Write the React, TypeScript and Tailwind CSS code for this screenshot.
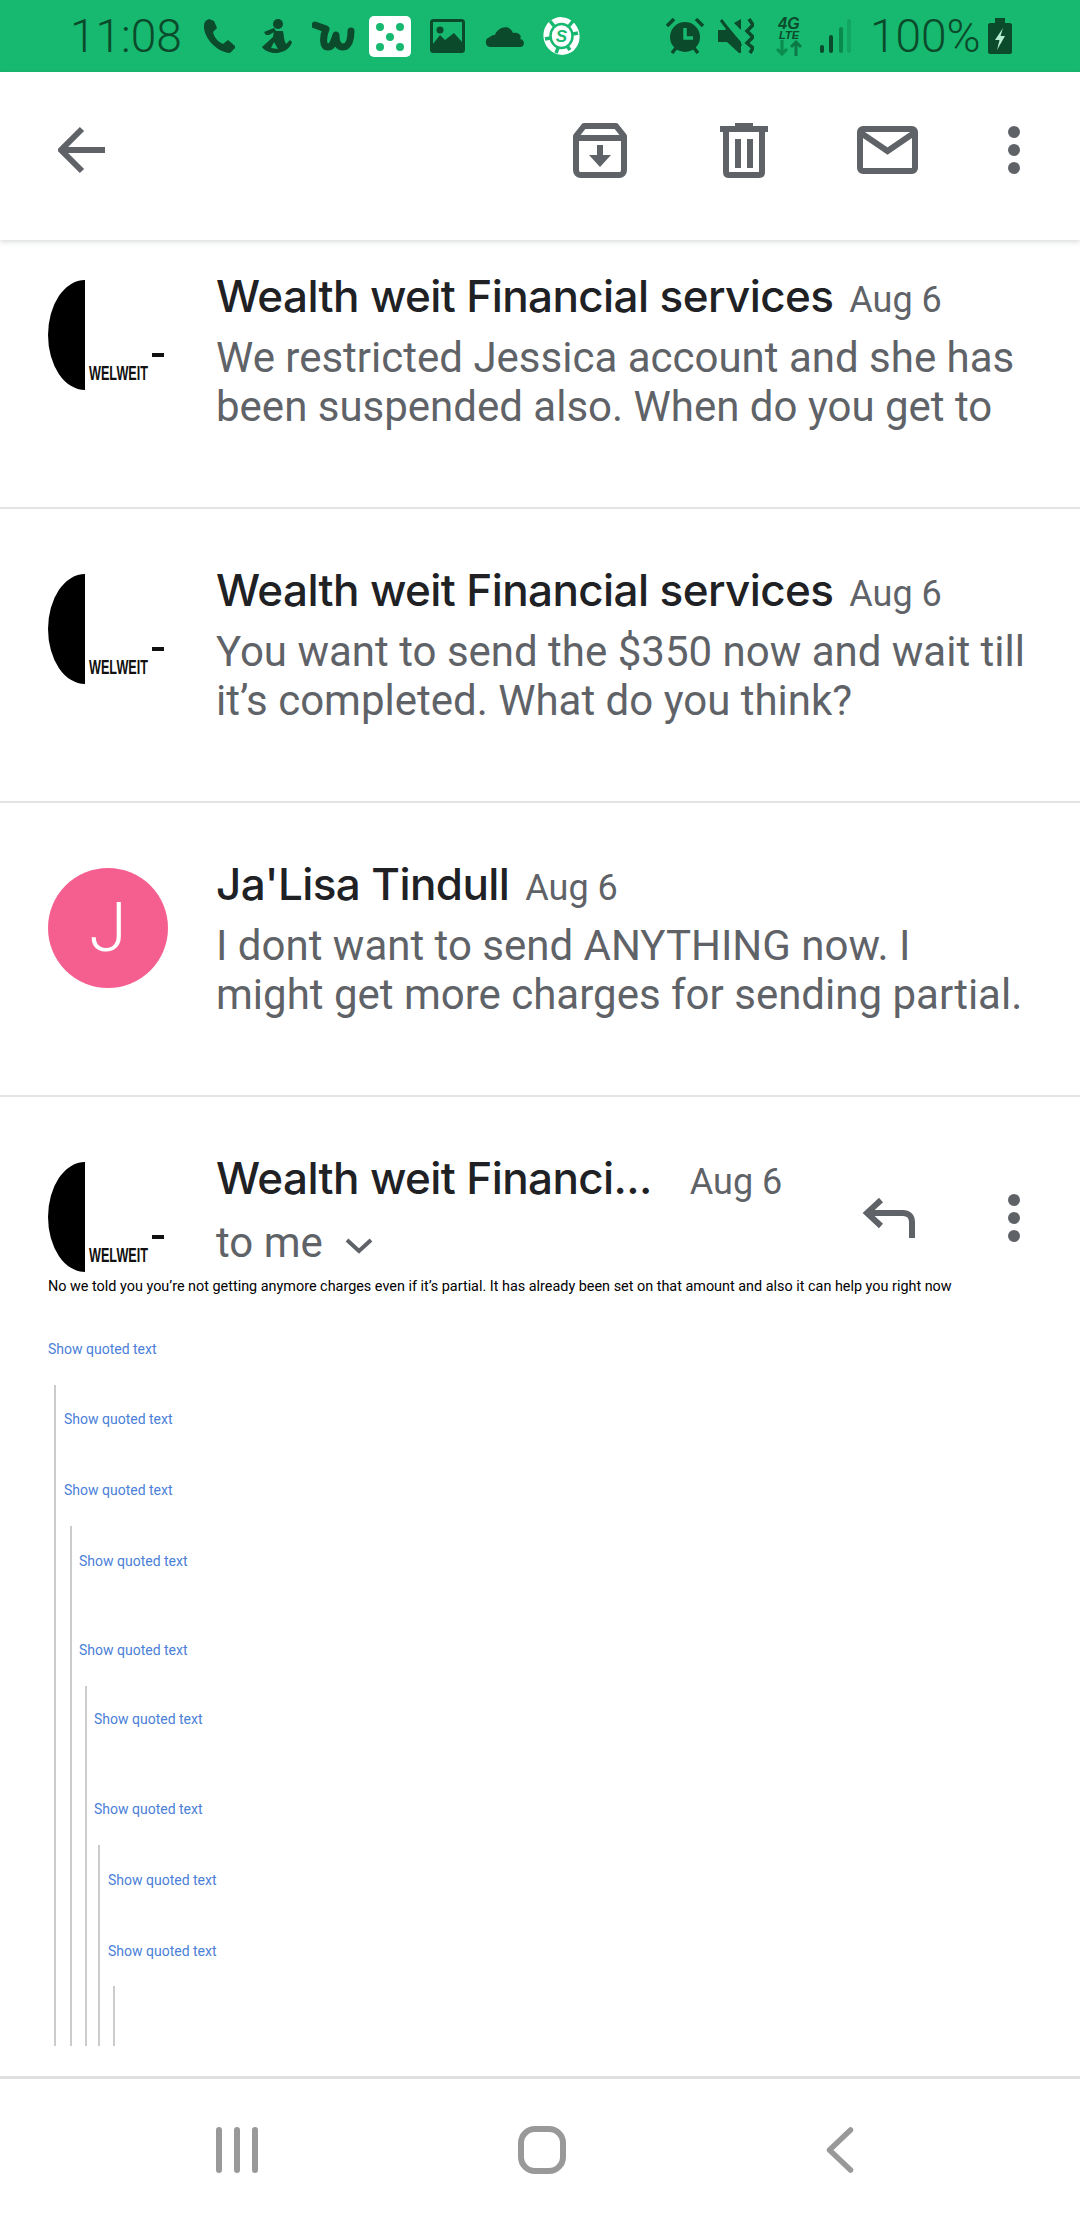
import React from "react";

const DARK = "#0b4a2b";
const GRAY = "#5f6368";

function Logo() {
  return (
    <svg width="120" height="112" viewBox="0 0 120 112" className="shrink-0 block">
      <path d="M37 0 A37 55 0 0 0 37 110 Z" fill="#000" />
      <rect x="104" y="73" width="12" height="4" fill="#111" />
      <text x="41" y="100" fontFamily="'Liberation Sans', sans-serif" fontWeight="700" fontSize="21" textLength="59" lengthAdjust="spacingAndGlyphs" fill="#111">WELWEIT</text>
    </svg>
  );
}

function Dots() {
  return (
    <svg width="12" height="48" viewBox="0 0 12 48" className="block shrink-0">
      <circle cx="6" cy="6" r="6" fill={GRAY} />
      <circle cx="6" cy="24" r="6" fill={GRAY} />
      <circle cx="6" cy="42" r="6" fill={GRAY} />
    </svg>
  );
}

function StatusBar() {
  return (
    <div className="h-[72px] shrink-0 bg-[#17b86f] flex items-center justify-between pl-[70px] pr-[68px] text-[#0b4a2b] font-['Roboto',sans-serif]">
      <div className="flex items-center">
        <span className="w-[132px] text-[46px] leading-[46px] font-light">11:08</span>
        <svg width="34" height="34" viewBox="0 0 34 34"><path d="M7 0 L12 2 L15 9 L11 13 C12 18 16 23 21 25 L26 21 L33 27 L33 29 L28 34 C14 33 1 18 2 6 C2 3 4 1 7 0 Z" fill={DARK} /></svg>
        <svg width="30" height="34" viewBox="0 0 30 34" className="ml-[26px]"><circle cx="16" cy="5" r="5" fill={DARK} /><path d="M2 13 L12 9 L14 12 L7 16 L4 16 Z" fill={DARK} /><path d="M12 12 L21 12 C22 18 22 21 24 25 L28 21 L30 23 C28 30 22 33 15 34 C8 34 3 32 0 28 C4 24 8 21 11 18 Z" fill={DARK} /><path d="M12 23 L16 30 L9 29 Z" fill="#17b86f" /></svg>
        <svg width="43" height="30" viewBox="0 0 43 30" className="ml-[20px]"><path d="M3 4 L14 8 C11 15 10 26 16 26 C21 26 22 19 24 14 C24 20 25 26 31 26 C37 26 39 18 39 10" fill="none" stroke={DARK} strokeWidth="7" strokeLinecap="round" strokeLinejoin="round" /></svg>
        <svg width="42" height="41" viewBox="0 0 42 41" className="ml-[14px]"><rect width="42" height="41" rx="5" fill="#fff" /><circle cx="11" cy="11" r="4" fill="#17b86f" /><circle cx="31" cy="11" r="4" fill="#17b86f" /><circle cx="21" cy="21" r="4" fill="#17b86f" /><circle cx="11" cy="31" r="4" fill="#17b86f" /><circle cx="31" cy="31" r="4" fill="#17b86f" /></svg>
        <svg width="35" height="34" viewBox="0 0 35 34" className="ml-[19px]"><rect x="1.5" y="1.5" width="32" height="31" rx="2" fill="none" stroke={DARK} strokeWidth="3" /><circle cx="10" cy="11" r="3.5" fill={DARK} /><path d="M3 27 L3 25 L10 16 L15 21 L24 14 L32 23 L32 32 L3 32 Z" fill={DARK} /></svg>
        <svg width="39" height="22" viewBox="0 0 39 22" className="ml-[20px]"><path d="M5 22 C0 22 -1 13 5 12 C7 10 9 10 10 10 C12 3 24 -2 28 8 C35 7 37 12 35 14 C41 15 39 22 36 22 Z" fill={DARK} /></svg>
        <svg width="37" height="38" viewBox="0 0 37 38" className="ml-[19px]"><ellipse cx="18.5" cy="19" rx="18" ry="19" fill="#fff" transform="rotate(-20 18.5 19)" /><ellipse cx="18.5" cy="19" rx="11" ry="12" fill="#fff" stroke="#17b86f" strokeWidth="2.5" /><path d="M7 4 L11 9 M30 4 L26 9 M2 22 L7 21 M35 16 L30 17 M13 36 L15 31 M27 33 L24 29" stroke="#17b86f" strokeWidth="3.5" /><text x="18.5" y="25" textAnchor="middle" fontFamily="'Liberation Sans', sans-serif" fontWeight="700" fontStyle="italic" fontSize="17" fill="#17b86f">S</text></svg>
      </div>
      <div className="flex items-center">
        <svg width="38" height="36" viewBox="0 0 38 36"><circle cx="19" cy="19" r="15" fill={DARK} /><path d="M1 8 L8 1 M37 8 L30 1 M6 35 L10 30 M32 35 L28 30" stroke={DARK} strokeWidth="3.5" /><path d="M19 10 L19 20 L27 20" fill="none" stroke="#17b86f" strokeWidth="3.5" /></svg>
        <svg width="36" height="36" viewBox="0 0 36 36" className="ml-[14px]"><path d="M0 12 L7 12 L10 9 L23 24 L23 35 L21 35 L9 24 L0 24 Z" fill={DARK} /><path d="M16 5 L23 1 L23 12 Z" fill={DARK} /><path d="M3 2 L23 28" stroke={DARK} strokeWidth="3" /><path d="M31 1 L35 7 L29 13 L35 19 L29 25 L35 30 L32 35" fill="none" stroke={DARK} strokeWidth="3.5" /></svg>
        <div className="ml-[22px] w-[26px] flex flex-col items-center">
          <span className="text-[16px] leading-[14px] font-extrabold italic font-['Liberation_Sans',sans-serif]">4G</span>
          <span className="text-[11px] leading-[9px] font-bold italic font-['Liberation_Sans',sans-serif]">LTE</span>
          <svg width="26" height="16" viewBox="0 0 26 16"><path d="M6 0 L6 14 M1 9 L6 14 L11 9" fill="none" stroke="#0b8a4f" strokeWidth="3" /><path d="M20 16 L20 2 M15 7 L20 2 L25 7" fill="none" stroke="#0b7a46" strokeWidth="3" /></svg>
        </div>
        <svg width="31" height="34" viewBox="0 0 31 34" className="ml-[18px]"><rect x="0" y="26" width="4" height="8" rx="2" fill={DARK} /><rect x="9" y="16" width="4" height="18" rx="2" fill={DARK} /><rect x="19" y="8" width="4" height="26" rx="2" fill="#0b8a4f" /><rect x="27" y="0" width="4" height="34" rx="2" fill="#12a563" /></svg>
        <span className="ml-[19px] w-[118px] text-[46px] leading-[46px] font-light">100%</span>
        <svg width="24" height="36" viewBox="0 0 24 36"><path d="M7 0 L17 0 L17 5 L22 5 C23 5 24 6 24 7 L24 34 C24 35 23 36 22 36 L2 36 C1 36 0 35 0 34 L0 7 C0 6 1 5 2 5 L7 5 Z" fill={DARK} /><path d="M15 10 L7 22 L11.5 22 L9 32 L17 18 L12.5 18 Z" fill="#b7ecd2" /></svg>
      </div>
    </div>
  );
}

function Toolbar() {
  return (
    <div className="h-[168px] shrink-0 bg-white relative z-10 shadow-[0_2px_5px_rgba(60,64,67,0.18)] flex items-center pl-[58px] pr-[60px]">
      <svg width="48" height="48" viewBox="0 0 48 48" className="-mt-[12px]"><path d="M47 24 L5 24 M24 3 L3 24 L24 45" fill="none" stroke={GRAY} strokeWidth="6" /></svg>
      <div className="ml-auto flex items-center -mt-[12px]">
        <svg width="54" height="55" viewBox="0 0 54 55"><path d="M11 3 L43 3 L51 13 L51 47 C51 50 49 52 47 52 L7 52 C5 52 3 50 3 47 L3 13 Z" fill="none" stroke={GRAY} strokeWidth="6" strokeLinejoin="round" /><path d="M3 15 L51 15" stroke={GRAY} strokeWidth="6" /><path d="M24 22 L30 22 L30 32 L38 32 L27 44 L16 32 L24 32 Z" fill={GRAY} /></svg>
        <svg width="48" height="55" viewBox="0 0 48 55" className="ml-[93px]"><path d="M15 0 L33 0 L33 3 L48 3 L48 9 L0 9 L0 3 L15 3 Z" fill={GRAY} /><path d="M6 9 L6 49 C6 51 7 52 9 52 L39 52 C41 52 42 51 42 49 L42 9" fill="none" stroke={GRAY} strokeWidth="6" /><rect x="15" y="16" width="6" height="29" fill={GRAY} /><rect x="27" y="16" width="6" height="29" fill={GRAY} /></svg>
        <svg width="61" height="48" viewBox="0 0 61 48" className="ml-[89px]"><rect x="3" y="3" width="55" height="42" rx="3" fill="none" stroke={GRAY} strokeWidth="6" /><path d="M4 7 L30.5 25 L57 7" fill="none" stroke={GRAY} strokeWidth="6" /></svg>
        <div className="ml-[90px]"><Dots /></div>
      </div>
    </div>
  );
}

function Name({ children }: { children: React.ReactNode }) {
  return <span className="font-['Inter',sans-serif] font-medium text-[44px] leading-[56px] tracking-[-0.6px] text-[#202124] whitespace-nowrap">{children}</span>;
}

function When() {
  return <span className="font-['Roboto',sans-serif] text-[36px] leading-[56px] text-[#5f6368] whitespace-nowrap">Aug 6</span>;
}

function Row({ avatar, name, lines }: { avatar: React.ReactNode; name: string; lines: string[] }) {
  return (
    <div className="h-[294px] shrink-0 border-b-2 border-[#e3e4e6] pl-[48px] pt-[65px] flex bg-white">
      <div className="w-[168px] shrink-0">{avatar}</div>
      <div className="-mt-[12px]">
        <div className="flex items-baseline gap-[16px]">
          <Name>{name}</Name>
          <When />
        </div>
        <div className="mt-[5px] font-['Roboto',sans-serif] text-[42px] leading-[49px] text-[#5f6368] whitespace-nowrap">
          {lines.map((l) => (
            <div key={l}>{l}</div>
          ))}
        </div>
      </div>
    </div>
  );
}

function Show({ className = "" }: { className?: string }) {
  return <div className={`font-['Roboto',sans-serif] text-[14px] leading-[20px] text-[#4a80d8] whitespace-nowrap ${className}`}>Show quoted text</div>;
}

export default function App() {
  const jAvatar = (
    <div className="w-[120px] h-[120px] rounded-full bg-[#f45f90] flex items-center justify-center text-white font-['Roboto',sans-serif] font-light text-[68px] leading-none">J</div>
  );
  return (
    <div className="w-[1080px] h-[2220px] bg-white flex flex-col overflow-hidden">
      <StatusBar />
      <Toolbar />
      <div className="flex-1 min-h-0 overflow-hidden">
        <div className="-mt-[25px] flex flex-col">
          <Row avatar={<Logo />} name="Wealth weit Financial services" lines={["We restricted Jessica account and she has", "been suspended also. When do you get to"]} />
          <Row avatar={<Logo />} name="Wealth weit Financial services" lines={["You want to send the $350 now and wait till", "it’s completed. What do you think?"]} />
          <Row avatar={jAvatar} name="Ja'Lisa Tindull" lines={["I dont want to send ANYTHING now. I", "might get more charges for sending partial."]} />
          <div className="pl-[48px] pt-[65px] flex">
            <div className="w-[168px] shrink-0"><Logo /></div>
            <div className="-mt-[12px]">
              <div className="flex items-baseline">
                <Name>Wealth weit Financi...</Name>
                <span className="ml-[38px]"><When /></span>
              </div>
              <div className="mt-[8px] flex items-center font-['Roboto',sans-serif] text-[42px] leading-[50px] text-[#5f6368]">
                to me
                <svg width="28" height="16" viewBox="0 0 28 16" className="ml-[22px] mt-[6px]"><path d="M2 2 L14 13 L26 2" fill="none" stroke={GRAY} strokeWidth="4" /></svg>
              </div>
            </div>
            <svg width="53" height="40" viewBox="0 0 53 40" className="absolute left-[862px] top-[1198px]"><path d="M50 40 L50 24 C50 18 46 15 41 15 L6 15 M19 2 L5 15 L19 28" fill="none" stroke={GRAY} strokeWidth="6" /></svg>
            <div className="absolute left-[1008px] top-[1194px]"><Dots /></div>
          </div>
          <div className="pl-[48px] mt-[3px]">
            <div className="font-['Roboto',sans-serif] text-[14.4px] leading-[20px] text-black whitespace-nowrap">No we told you you’re not getting anymore charges even if it’s partial. It has already been set on that amount and also it can help you right now</div>
            <Show className="mt-[42px]" />
            <div className="mt-[26px] ml-[6px] border-l-2 border-[#cccccc] pl-[8px] pt-[24px]">
              <Show />
              <Show className="mt-[51px]" />
              <div className="mt-[26px] ml-[6px] border-l-2 border-[#cccccc] pl-[7px] pt-[25px]">
                <Show />
                <Show className="mt-[69px]" />
                <div className="mt-[26px] ml-[6px] border-l-2 border-[#cccccc] pl-[7px] pt-[23px]">
                  <Show />
                  <Show className="mt-[70px]" />
                  <div className="mt-[26px] ml-[4px] border-l-2 border-[#cccccc] pl-[8px] pt-[25px]">
                    <Show />
                    <Show className="mt-[51px]" />
                    <div className="mt-[25px] ml-[5px] border-l-2 border-[#cccccc] h-[60px]" />
                  </div>
                </div>
              </div>
            </div>
          </div>
        </div>
      </div>
      <div className="h-[144px] shrink-0 bg-white border-t-[3px] border-[#e0e0e0] flex items-center pl-[216px] pr-[226px] justify-between">
        <svg width="42" height="46" viewBox="0 0 42 46"><rect x="0" y="0" width="6" height="46" rx="3" fill="#999" /><rect x="18" y="0" width="6" height="46" rx="3" fill="#999" /><rect x="36" y="0" width="6" height="46" rx="3" fill="#999" /></svg>
        <svg width="48" height="48" viewBox="0 0 48 48"><rect x="3" y="3" width="42" height="42" rx="14" fill="none" stroke="#999" strokeWidth="6" /></svg>
        <svg width="28" height="46" viewBox="0 0 28 46"><path d="M24.5 3 L3.5 23 L24.5 43" fill="none" stroke="#999" strokeWidth="5.5" strokeLinecap="round" strokeLinejoin="round" /></svg>
      </div>
    </div>
  );
}
